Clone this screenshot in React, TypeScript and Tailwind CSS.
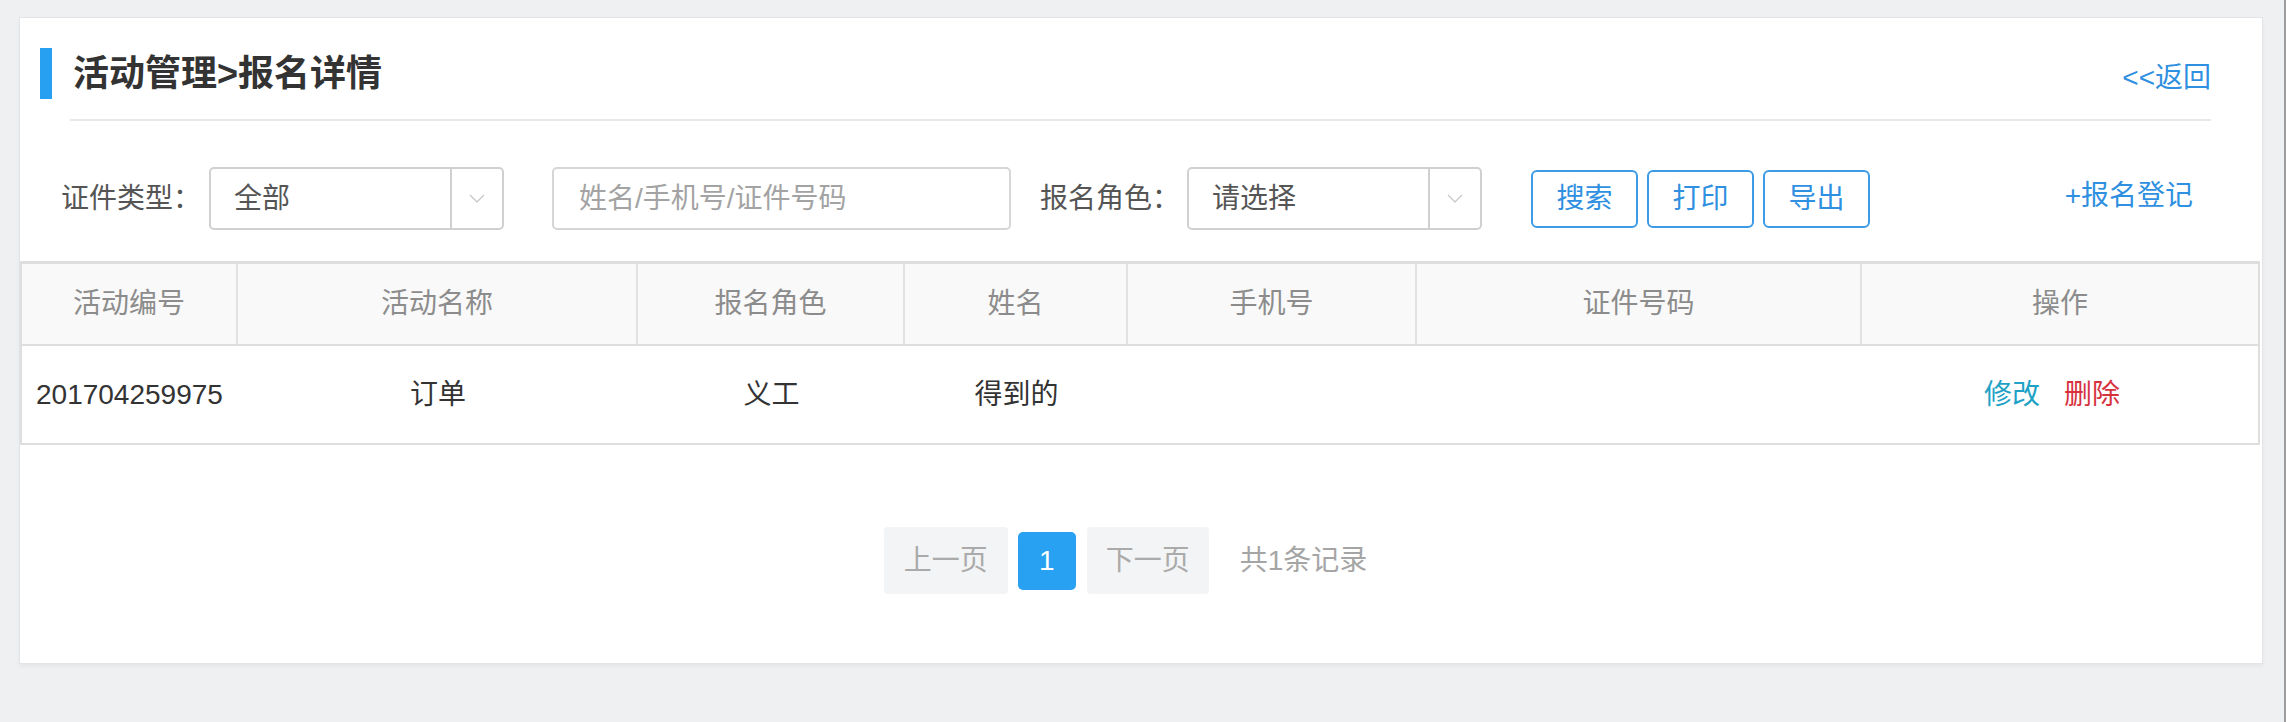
import React from "react";

const Chevron = () => (
  <svg width="16" height="9" viewBox="0 0 16 9" fill="none">
    <polyline points="1,1 8,8 15,1" stroke="#c4c4c4" strokeWidth="1.2" />
  </svg>
);

function Select({ text }: { text: string }) {
  return (
    <div className="flex h-[63px] w-[295px] rounded-[5px] border-2 border-[#d0d0d0] bg-white">
      <div className="flex flex-1 items-center pl-[23px] text-[28px] text-[#555]">{text}</div>
      <div className="flex w-[52px] items-center justify-center border-l-2 border-[#d0d0d0]">
        <Chevron />
      </div>
    </div>
  );
}

function Btn({ text, ml }: { text: string; ml: string }) {
  return (
    <div
      className={`flex h-[58px] w-[107px] items-center justify-center rounded-[6px] border-2 border-[#3d9be6] text-[28px] text-[#2f8fe0] ${ml}`}
    >
      {text}
    </div>
  );
}

const headers = ["活动编号", "活动名称", "报名角色", "姓名", "手机号", "证件号码", "操作"];

export default function App() {
  return (
    <div className="box-border flex min-h-[722px] w-full border-r-2 border-[#9c9c9c] bg-[#eef0f2] font-['Liberation_Sans','Noto_Sans_CJK_SC',sans-serif]">
      <div className="ml-[19px] mt-[17px] box-border flex h-[647px] w-[2244px] flex-col border border-[#e2e4e7] bg-white shadow-[0_3px_4px_rgba(0,0,0,0.04)]">
        {/* Title row */}
        <div className="ml-[20px] mr-[51px] mt-[30px] flex h-[51px] items-center">
          <div className="h-[51px] w-[12px] bg-[#27a0f2]" />
          <div className="ml-[21px] text-[36px] font-bold leading-none text-[#333]">活动管理&gt;报名详情</div>
          <div className="ml-auto mt-[8px] text-[28px] leading-none text-[#2f8fe0]">&lt;&lt;返回</div>
        </div>
        <div className="ml-[50px] mr-[51px] mt-[20px] h-[2px] bg-[#e8e8e8]" />

        {/* Filter row */}
        <div className="mt-[46px] flex h-[63px] items-center">
          <div className="ml-[41px] text-[28px] text-[#555]">证件类型：</div>
          <div className="ml-[8px]">
            <Select text="全部" />
          </div>
          <div className="ml-[48px] flex h-[63px] w-[459px] items-center rounded-[5px] border-2 border-[#d6d6d6] pl-[25px] text-[28px] text-[#a3a3a3]">
            姓名/手机号/证件号码
          </div>
          <div className="ml-[29px] text-[28px] text-[#555]">报名角色：</div>
          <div className="ml-[7px]">
            <Select text="请选择" />
          </div>
          <Btn text="搜索" ml="ml-[49px]" />
          <Btn text="打印" ml="ml-[9px]" />
          <Btn text="导出" ml="ml-[9px]" />
          <div className="ml-auto mr-[69px] mt-[-6px] text-[28px] text-[#2f8fe0]">+报名登记</div>
        </div>

        {/* Table */}
        <div className="mr-[2px] mt-[31px] border-x-2 border-t-[3px] border-b-2 border-[#dedede]">
          <div className="grid h-[82px] grid-cols-[216px_400px_267px_223px_289px_445px_1fr] border-b-2 border-[#dedede] bg-[#f9f9f9]">
            {headers.map((h, i) => (
              <div
                key={h}
                className={`flex items-center justify-center text-[28px] text-[#8c8c8c] ${
                  i < headers.length - 1 ? "border-r-2 border-[#e2e2e2]" : ""
                }`}
              >
                {h}
              </div>
            ))}
          </div>
          <div className="grid h-[97px] grid-cols-[216px_400px_267px_223px_289px_445px_1fr] text-[28px] text-[#333]">
            <div className="flex items-center pl-[14px]">201704259975</div>
            <div className="flex items-center justify-center">订单</div>
            <div className="flex items-center justify-center">义工</div>
            <div className="flex items-center justify-center">得到的</div>
            <div />
            <div />
            <div className="flex items-center justify-center gap-[24px] pr-[16px]">
              <span className="text-[#1fa2c6]">修改</span>
              <span className="text-[#d6323e]">删除</span>
            </div>
          </div>
        </div>

        {/* Pagination */}
        <div className="mt-[82px] flex items-center justify-center pr-[31px]">
          <div className="flex h-[67px] w-[124px] items-center justify-center rounded-[4px] bg-[#f3f4f5] text-[28px] text-[#aaa]">
            上一页
          </div>
          <div className="ml-[10px] flex h-[58px] w-[58px] items-center justify-center rounded-[5px] bg-[#28a1f2] text-[28px] text-white">
            1
          </div>
          <div className="ml-[11px] flex h-[67px] w-[122px] items-center justify-center rounded-[4px] bg-[#f3f4f5] text-[28px] text-[#aaa]">
            下一页
          </div>
          <div className="ml-[31px] text-[28px] text-[#a5a5a5]">共1条记录</div>
        </div>
      </div>
    </div>
  );
}
